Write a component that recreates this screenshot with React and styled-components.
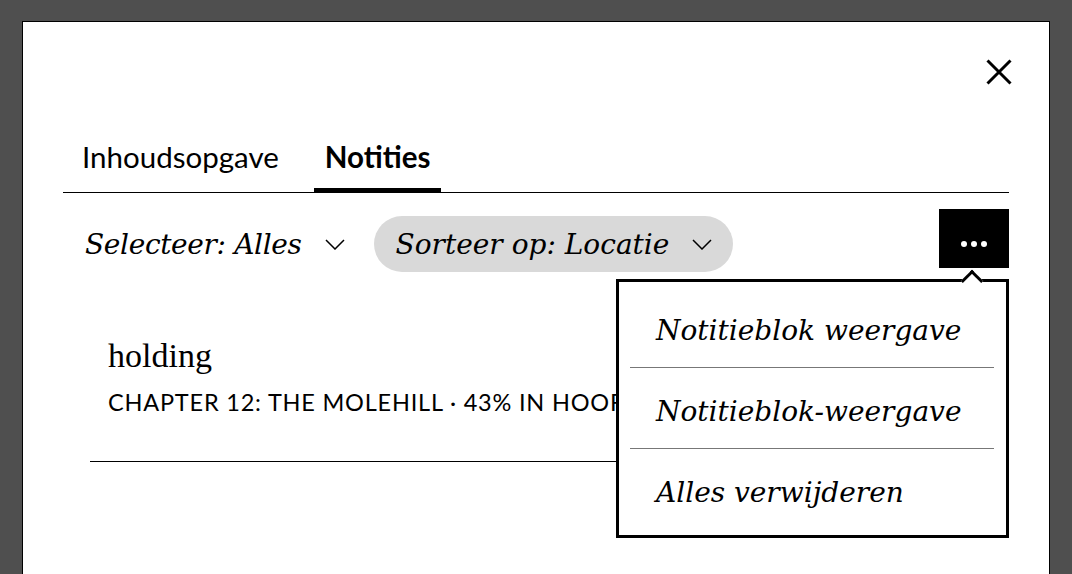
import React from "react";
import styled, { createGlobalStyle } from "styled-components";

const GlobalStyle = createGlobalStyle`
  html, body {
    margin: 0;
    padding: 0;
    background: #4f4f4f;
    overflow: hidden;
  }
  * {
    box-sizing: border-box;
  }
`;

const Page = styled.div`
  padding: 21px 22px 0;
  height: 574px;
`;

const Modal = styled.div`
  background: #fff;
  border: 1px solid #000;
  border-bottom: none;
  height: 620px;
  padding: 0 40px;
`;

const CloseRow = styled.div`
  display: flex;
  justify-content: flex-end;
  padding-top: 30px;
  margin-right: -10px;
`;

const CloseButton = styled.button`
  width: 40px;
  height: 40px;
  border: none;
  background: none;
  padding: 0;
  display: flex;
  align-items: center;
  justify-content: center;
  cursor: pointer;
`;

const TabBar = styled.div`
  display: flex;
  gap: 24px;
  margin-top: 45px;
  padding-left: 8px;
  border-bottom: 1px solid #000;
`;

const Tab = styled.div`
  font-family: Lato, "Open Sans", sans-serif;
  font-size: 29.5px;
  line-height: 40px;
  font-weight: ${({ active }) => (active ? 700 : 400)};
  color: #000;
  padding: 0 11px 11px;
  border-bottom: 5px solid ${({ active }) => (active ? "#000" : "transparent")};
  margin-bottom: -1px;
`;

const FilterRow = styled.div`
  display: flex;
  align-items: flex-start;
  margin-top: 16px;
`;

const Selector = styled.div`
  display: flex;
  align-items: center;
  gap: 23px;
  height: 56px;
  margin-top: 7px;
  margin-left: ${({ pill }) => (pill ? "29px" : "0")};
  padding: ${({ pill }) => (pill ? "0 21px 0 22px" : "0 0 0 22px")};
  border-radius: 28px;
  background: ${({ pill }) => (pill ? "#d9d9d9" : "transparent")};
  font-family: "DejaVu Serif", Georgia, serif;
  font-style: italic;
  font-size: 28px;
  letter-spacing: ${({ pill }) => (pill ? "0" : "-0.35px")};
  color: #000;
  white-space: nowrap;
`;

const MoreWrap = styled.div`
  position: relative;
  margin-left: auto;
`;

const MoreButton = styled.div`
  width: 70px;
  height: 59px;
  background: #000;
  display: flex;
  align-items: center;
  justify-content: center;
  gap: 4px;
  padding-top: 11px;
`;

const Dot = styled.span`
  width: 6px;
  height: 6px;
  border-radius: 50%;
  background: #fff;
`;

const Dropdown = styled.div`
  position: absolute;
  top: calc(100% + 11px);
  right: 0;
  width: 393px;
  border: 3px solid #000;
  background: #fff;
  padding: 5px 0;
  z-index: 5;
`;

const Notch = styled.span`
  position: absolute;
  top: -9px;
  right: 26px;
  width: 16px;
  height: 16px;
  background: #fff;
  border-top: 3px solid #000;
  border-left: 3px solid #000;
  transform: rotate(45deg);
`;

const DropItem = styled.div`
  display: flex;
  align-items: center;
  height: 81px;
  margin: 0 12px 0 11px;
  padding: 6px 0 0 26px;
  border-bottom: ${({ last }) => (last ? "none" : "1px solid #777")};
  font-family: "DejaVu Serif", Georgia, serif;
  font-style: italic;
  font-size: 28px;
  color: #000;
  white-space: nowrap;
`;

const NoteList = styled.div`
  margin-top: 64px;
  padding-left: 27px;
`;

const NoteItem = styled.div`
  padding: 0 0 44px 18px;
  border-bottom: 1px solid #000;
`;

const NoteTitle = styled.div`
  font-family: "Liberation Serif", serif;
  font-size: 34px;
  line-height: 1.2;
  color: #000;
`;

const NoteMeta = styled.div`
  margin-top: 10px;
  max-width: 508px;
  font-family: Lato, "Open Sans", sans-serif;
  font-size: 23.5px;
  letter-spacing: 0.8px;
  line-height: 30px;
  color: #000;
  white-space: nowrap;
  overflow: hidden;
`;

const Chevron = () => (
  <svg width="20" height="11" viewBox="0 0 20 11" fill="none">
    <path d="M1 1 L10 10 L19 1" stroke="#000" strokeWidth="1.5" />
  </svg>
);

const CloseIcon = () => (
  <svg width="26" height="26" viewBox="0 0 26 26" fill="none">
    <path d="M1.5 1.5 L24.5 24.5 M24.5 1.5 L1.5 24.5" stroke="#000" strokeWidth="3" />
  </svg>
);

const menuItems = ["Notitieblok weergave", "Notitieblok-weergave", "Alles verwijderen"];

const App = () => (
  <>
    <GlobalStyle />
    <Page>
      <Modal>
        <CloseRow>
          <CloseButton aria-label="Sluiten">
            <CloseIcon />
          </CloseButton>
        </CloseRow>
        <TabBar>
          <Tab>Inhoudsopgave</Tab>
          <Tab active>Notities</Tab>
        </TabBar>
        <FilterRow>
          <Selector>
            Selecteer: Alles
            <Chevron />
          </Selector>
          <Selector pill>
            Sorteer op: Locatie
            <Chevron />
          </Selector>
          <MoreWrap>
            <MoreButton>
              <Dot />
              <Dot />
              <Dot />
            </MoreButton>
            <Dropdown>
              <Notch />
              {menuItems.map((item, i) => (
                <DropItem key={item} last={i === menuItems.length - 1}>
                  {item}
                </DropItem>
              ))}
            </Dropdown>
          </MoreWrap>
        </FilterRow>
        <NoteList>
          <NoteItem>
            <NoteTitle>holding</NoteTitle>
            <NoteMeta>CHAPTER 12: THE MOLEHILL · 43% IN HOOFDSTUK</NoteMeta>
          </NoteItem>
        </NoteList>
      </Modal>
    </Page>
  </>
);

export default App;
